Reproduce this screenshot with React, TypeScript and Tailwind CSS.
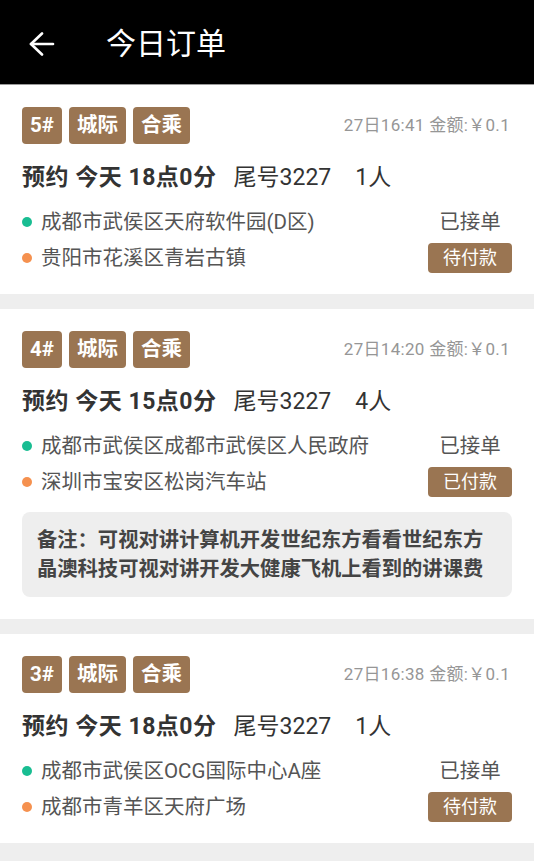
import React from "react";

type Order = {
  no: string;
  time: string;
  hour: string;
  tail: string;
  people: string;
  from: string;
  to: string;
  pay: string;
  remark?: string;
};

const orders: Order[] = [
  {
    no: "5#",
    time: "27日16:41 金额:￥0.1",
    hour: "18点0分",
    tail: "尾号3227",
    people: "1人",
    from: "成都市武侯区天府软件园(D区)",
    to: "贵阳市花溪区青岩古镇",
    pay: "待付款",
  },
  {
    no: "4#",
    time: "27日14:20 金额:￥0.1",
    hour: "15点0分",
    tail: "尾号3227",
    people: "4人",
    from: "成都市武侯区成都市武侯区人民政府",
    to: "深圳市宝安区松岗汽车站",
    pay: "已付款",
    remark:
      "备注：可视对讲计算机开发世纪东方看看世纪东方晶澳科技可视对讲开发大健康飞机上看到的讲课费",
  },
  {
    no: "3#",
    time: "27日16:38 金额:￥0.1",
    hour: "18点0分",
    tail: "尾号3227",
    people: "1人",
    from: "成都市武侯区OCG国际中心A座",
    to: "成都市青羊区天府广场",
    pay: "待付款",
  },
];

function Tag({ children }: { children: React.ReactNode }) {
  return (
    <div className="h-[37px] px-[8px] flex items-center rounded-[4px] bg-[#9a7552] text-white text-[20.5px] font-bold leading-none">
      {children}
    </div>
  );
}

function Card({ o }: { o: Order }) {
  return (
    <div className="bg-white px-[22px] pt-[22px] pb-[18px]">
      <div className="h-[37px] flex items-center justify-between">
        <div className="flex gap-[7px]">
          <Tag>{o.no}</Tag>
          <Tag>城际</Tag>
          <Tag>合乘</Tag>
        </div>
        <div className="text-[17px] tracking-[0.3px] text-[#969696] leading-none mr-[2px]">{o.time}</div>
      </div>
      <div className="mt-[18px] h-[30px] flex items-center text-[23px] text-[#333333] leading-none whitespace-nowrap">
        <span className="font-bold tracking-[0.5px]">预约 今天 {o.hour}</span>
        <span className="ml-[17px]">{o.tail}</span>
        <span className="ml-[24px]">{o.people}</span>
      </div>
      <div className="mt-[12px]">
        <div className="h-[36px] flex items-center justify-between">
          <div className="flex items-center">
            <span className="shrink-0 w-[10px] h-[10px] rounded-full bg-[#19bd92]" />
            <span className="ml-[9px] text-[20.5px] text-[#555555] leading-none">{o.from}</span>
          </div>
          <span className="w-[84px] text-center text-[20.5px] text-[#555555] leading-none">已接单</span>
        </div>
        <div className="h-[36px] flex items-center justify-between">
          <div className="flex items-center">
            <span className="shrink-0 w-[10px] h-[10px] rounded-full bg-[#f5914f]" />
            <span className="ml-[9px] text-[20.5px] text-[#555555] leading-none">{o.to}</span>
          </div>
          <span className="w-[84px] h-[30px] flex items-center justify-center rounded-[4px] bg-[#9a7552] text-white text-[18px] leading-none">
            {o.pay}
          </span>
        </div>
      </div>
      {o.remark && (
        <div className="mt-[12px] mb-[4px] h-[85px] rounded-[8px] bg-[#eeeeee] px-[15px] flex items-center">
          <p className="text-[20.3px] leading-[29px] font-bold text-[#444444]">{o.remark}</p>
        </div>
      )}
    </div>
  );
}

export default function App() {
  return (
    <div
      className="w-[534px] h-[861px] overflow-hidden bg-[#eeeeee]"
      style={{ fontFamily: "Roboto, 'Noto Sans CJK SC', sans-serif" }}
    >
      <div className="h-[84px] bg-black flex items-center pt-[4px]">
        <svg width="26" height="24" viewBox="0 0 26 24" className="ml-[29px]" fill="none" stroke="white" strokeWidth="2.6" strokeLinecap="round" strokeLinejoin="round">
          <path d="M2 12H24" />
          <path d="M13 1.5L2 12L13 22.5" />
        </svg>
        <span className="ml-[51px] text-[30px] text-white leading-none">今日订单</span>
      </div>
      <div className="h-[1px] bg-[#9a9a9a]" />
      <div className="flex flex-col gap-[15px]">
        {orders.map((o, i) => (
          <Card key={i} o={o} />
        ))}
      </div>
    </div>
  );
}
